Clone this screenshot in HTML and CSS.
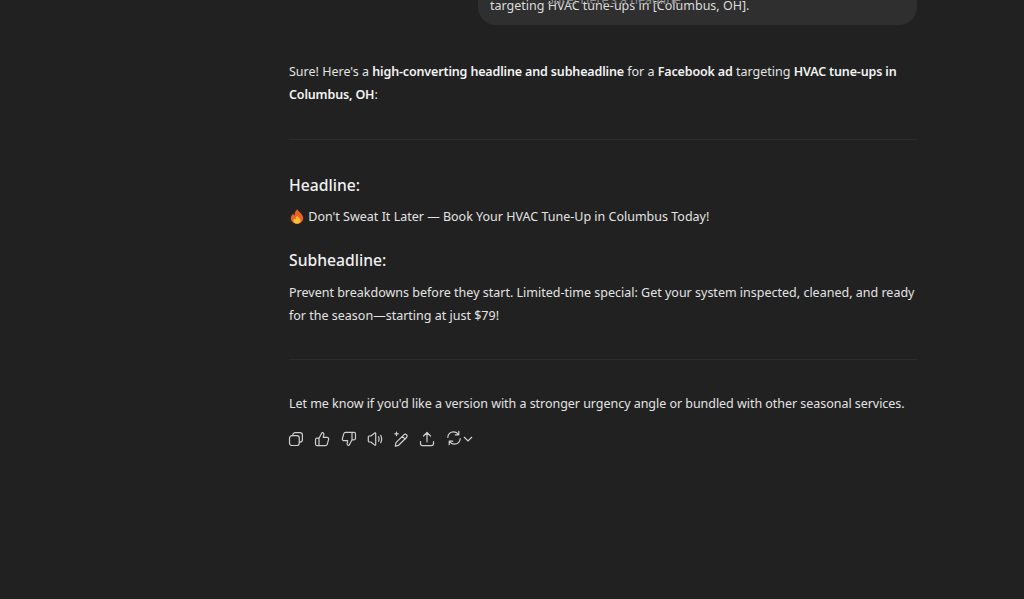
FILE: index.html
```html
<!DOCTYPE html>
<html lang="en">
<head>
    <meta charset="UTF-8">
    <meta name="viewport" content="width=device-width, initial-scale=1.0">
    <title>HVAC headline chat</title>
    <link rel="stylesheet" href="styles.css">
</head>
<body>
    <main class="thread">
        <div class="user-row">
            <div class="bubble">
                <span class="ghost">Sure! Here's a headline</span>
                targeting HVAC tune-ups in [Columbus, OH].
            </div>
        </div>

        <article class="reply">
            <p>Sure! Here's a <strong>high-converting headline and subheadline</strong> for a <strong>Facebook ad</strong> targeting <strong>HVAC tune-ups in Columbus, OH</strong>:</p>
            <hr>
            <h3>Headline:</h3>
            <p class="line">
                <svg class="flame" viewBox="0 0 16 16" aria-hidden="true">
                    <path fill="#e8622a" d="M8.400.3c.5 2.400 5.700 4.700 6.200 9 .4 3.500-2.900 6.400-6.600 6.400-3.700 0-6.700-2.700-6.600-6.100.1-2.200 1.400-3.700 2.400-4.900.2 1.100.8 1.900 1.700 2.300C5.300 4.500 6.200 1.800 8.400.3z"/>
                    <path fill="#fbc02d" d="M8.300 7.200c.3 1.500 3.500 2.800 3.500 5.300 0 1.900-1.700 3.200-3.800 3.200s-3.800-1.300-3.800-3.200c0-1.200.7-2 1.400-2.700.1.600.5 1.100 1 1.300-.1-1.500.4-3 1.700-3.900z"/>
                </svg>
                Don't Sweat It Later — Book Your HVAC Tune-Up in Columbus Today!
            </p>
            <h3>Subheadline:</h3>
            <p class="detail">Prevent breakdowns before they start. Limited-time special: Get your system inspected, cleaned, and ready for the season—starting at just $79!</p>
            <hr>
            <p class="closing">Let me know if you'd like a version with a stronger urgency angle or bundled with other seasonal services.</p>
        </article>

        <div class="actions">
            <svg class="icon" viewBox="0 0 16 16"><rect x="1.500" y="4.700" width="9.800" height="9.800" rx="2.500"/><path d="M4.800 4.600V4c0-1.300 1-2.400 2.400-2.400H12c1.300 0 2.400 1 2.400 2.400v4.800c0 1.300-1 2.400-2.400 2.400h-.7"/></svg>
            <svg class="icon" viewBox="0 0 16 16"><path d="M5 14.600V7.200l2.900-5.400c1.400-.4 2.200.8 1.900 2.100L9.300 6.300h3.700c1.100 0 1.900 1 1.600 2l-1.400 5c-.2.800-1 1.300-1.800 1.300H5zM5 7.200H3c-.8 0-1.500.7-1.500 1.500v4.400c0 .8.700 1.500 1.500 1.500h2"/></svg>
            <svg class="icon" viewBox="0 0 16 16"><path d="M11 1.400v7.400l-2.900 5.400c-1.400.4-2.200-.8-1.900-2.100l.5-2.400H3c-1.100 0-1.900-1-1.600-2l1.400-5c.2-.8 1-1.300 1.800-1.300H11zM11 8.800h2c.8 0 1.500-.7 1.500-1.500V2.900c0-.8-.7-1.500-1.500-1.500h-2"/></svg>
            <svg class="icon" viewBox="0 0 16 16"><path d="M1.300 6v4c0 .6.400 1 1 1h1.500l4 3.100c.4.300.9 0 .9-.5V2.400c0-.5-.5-.8-.9-.5l-4 3.100H2.300c-.6 0-1 .4-1 1zM11.500 5.800c.7 1.400.7 3 0 4.400M13.700 4.300c1.200 2.300 1.200 5.100 0 7.400"/></svg>
            <svg class="icon" viewBox="0 0 16 16"><path d="M5.600 14.300l-3.400.9.800-3.500 7.800-7.900c.8-.8 2-.8 2.700 0 .8.700.8 1.900 0 2.700l-7.900 7.800zM9.300 5.300l2.800 2.800M3.500 1v3.600M1.700 2.800h3.600"/></svg>
            <svg class="icon" viewBox="0 0 16 16"><path d="M8 10.800V1.500M4.500 5 8 1.500 11.500 5M1.500 10.500v2c0 1.200.9 2.100 2.100 2.100h8.800c1.200 0 2.100-.9 2.100-2.100v-2"/></svg>
            <span class="regen">
                <svg class="icon" viewBox="0 0 16 16"><path d="M1.800 7.500C1.800 4.300 4.300 1.800 7.500 1.800c2 0 3.800 1 4.800 2.700M12.800 1.300v3.500H9.300M14.200 8.500c0 3.200-2.500 5.700-5.700 5.700-2 0-3.800-1-4.800-2.700M3.200 14.700v-3.500h3.500"/></svg>
                <svg class="chevron" viewBox="0 0 10 10"><path d="M1 3l4 4 4-4"/></svg>
            </span>
        </div>
    </main>
</body>
</html>
```

FILE: styles.css
```css
html, body {
    margin: 0;
    height: 599px;
    overflow: hidden;
    background-color: #212121;
}
body {
    font-family: "Noto Sans", sans-serif;
    font-size: 12.500px;
    line-height: 23px;
    color: #e3e3e3;
}
.thread {
    width: 628px;
    margin-left: 289px;
}
.user-row {
    display: flex;
    justify-content: flex-end;
    margin-top: -20px;
}
.bubble {
    position: relative;
    width: 415px;
    height: 25px;
    padding: 14px 12px 6px 12px;
    border-radius: 18px;
    background-color: #2f2f2f;
    color: #dcdcdc;
}
.ghost {
    position: absolute;
    top: 8px;
    left: 69px;
    color: #8e8e8e;
}
.reply {
    margin-top: 35px;
}
.reply p {
    margin: 0;
}
.reply strong {
    font-weight: 600;
    letter-spacing: -0.150px;
    color: #f2f2f2;
}
.reply hr {
    height: 1px;
    margin: 33px 0 32px;
    border: 0;
    background-color: #2c2c2c;
}
.reply h3 {
    margin: 0 0 8px;
    font-size: 15.700px;
    font-weight: 500;
    line-height: 24px;
    color: #f0f0f0;
}
.reply hr + h3 {
    margin-top: 33px;
}
.reply .line {
    margin-bottom: 20px;
}
.reply .detail {
    margin-top: 9px;
    margin-bottom: -1px;
}
.reply .closing {
    letter-spacing: -0.040px;
}
.flame {
    width: 16px;
    height: 15px;
    vertical-align: -3px;
}
.actions {
    display: flex;
    align-items: center;
    gap: 10.300px;
    margin-top: 16px;
    margin-left: -1px;
}
.icon {
    display: block;
    width: 16px;
    height: 16px;
    fill: none;
    stroke: #cfcfcf;
    stroke-width: 1.200;
    stroke-linecap: round;
    stroke-linejoin: round;
}
.regen {
    display: flex;
    align-items: center;
    gap: 1px;
    margin-top: -3px;
}
.chevron {
    width: 10px;
    height: 10px;
    margin-top: 2px;
    fill: none;
    stroke: #cfcfcf;
    stroke-width: 1.200;
}
```
